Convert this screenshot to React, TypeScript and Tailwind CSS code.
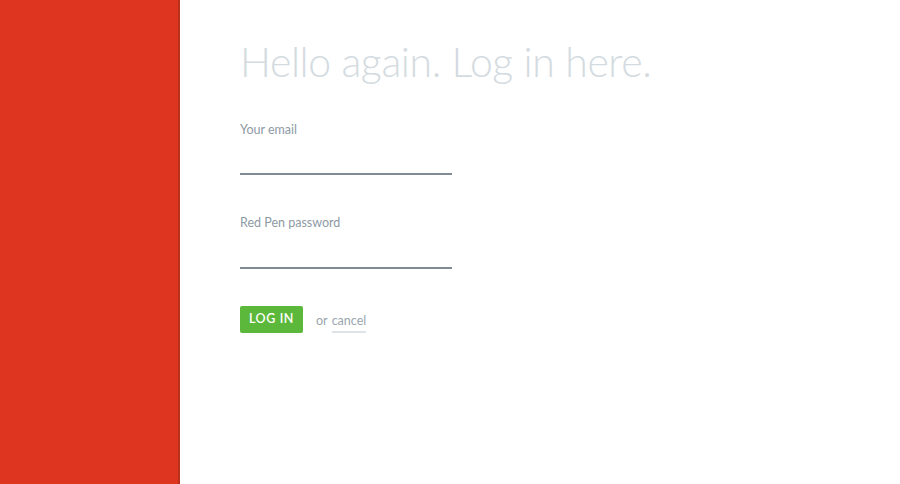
export default function App() {
  return (
    <div className="flex h-[484px] w-[900px] bg-white" style={{ fontFamily: "Lato, 'Open Sans', sans-serif" }}>
      <div className="h-full w-[180px] border-r-2 border-[#b9301d] bg-[#dd3520]" />
      <div className="flex flex-1 flex-col pl-[60px] pt-[36px]">
        <h1 className="text-[41px] font-light leading-[52px] tracking-[-0.4px] text-[#d3dbe0]">Hello again. Log in here.</h1>
        <div className="mt-[34px] flex flex-col">
          <label className="text-[12.5px] leading-[16px] text-[#8d9aa4]">Your email</label>
          <div className="mt-[35px] h-[2px] w-[212px] bg-[#7f8c95]" />
          <label className="mt-[40px] text-[12.5px] leading-[16px] text-[#8d9aa4]">Red Pen password</label>
          <div className="mt-[36px] h-[2px] w-[212px] bg-[#7f8c95]" />
        </div>
        <div className="mt-[36px] flex items-center">
          <button className="flex h-[27px] w-[63px] items-center justify-center rounded-[2px] bg-[#5cb83a] pt-[1px] text-[12.5px] font-semibold tracking-[0.6px] text-white">LOG IN</button>
          <span className="ml-[13px] pt-[4px] text-[12.5px] text-[#9aa6ae]">or</span>
          <span className="ml-[4px] mt-[8px] border-b-2 border-[#dde3e7] pb-[2px] text-[12.5px] leading-[16px] text-[#9aa6ae]">cancel</span>
        </div>
      </div>
    </div>
  );
}
